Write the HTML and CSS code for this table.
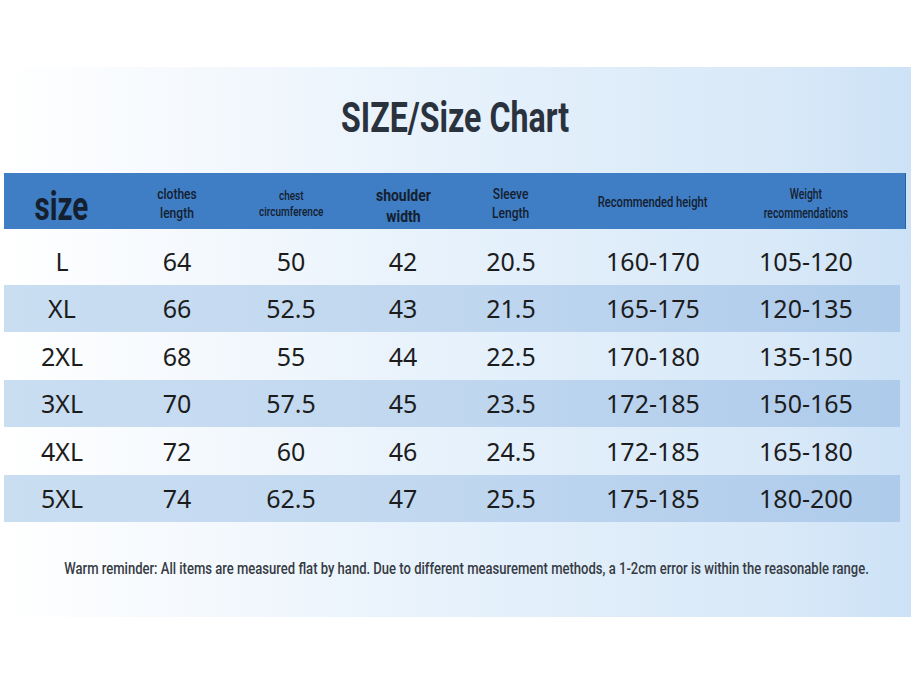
FILE: index.html
```html
<!DOCTYPE html>
<html lang="en">
<head>
<meta charset="utf-8">
<title>Size Chart</title>
<link rel="stylesheet" href="styles.css">
</head>
<body>
<div class="top-space"></div>
<section class="panel">
  <h1 class="title"><span class="sq">SIZE/Size Chart</span></h1>
  <div class="table">
    <div class="head">
      <div class="hcell hsize"><span class="sq">size</span></div>
      <div class="hcell hc-a"><span class="sq">clothes<br>length</span></div>
      <div class="hcell hsmall"><span class="sq">chest<br>circumference</span></div>
      <div class="hcell hbig"><span class="sq">shoulder<br>width</span></div>
      <div class="hcell hc-a"><span class="sq">Sleeve<br>Length</span></div>
      <div class="hcell hc-rec"><span class="sq">Recommended height</span></div>
      <div class="hcell"><span class="sq">Weight<br>recommendations</span></div>
    </div>
    <div class="row"><div>L</div><div>64</div><div>50</div><div>42</div><div>20.5</div><div>160-170</div><div>105-120</div></div>
    <div class="row band"><div>XL</div><div>66</div><div>52.5</div><div>43</div><div>21.5</div><div>165-175</div><div>120-135</div></div>
    <div class="row"><div>2XL</div><div>68</div><div>55</div><div>44</div><div>22.5</div><div>170-180</div><div>135-150</div></div>
    <div class="row band"><div>3XL</div><div>70</div><div>57.5</div><div>45</div><div>23.5</div><div>172-185</div><div>150-165</div></div>
    <div class="row"><div>4XL</div><div>72</div><div>60</div><div>46</div><div>24.5</div><div>172-185</div><div>165-180</div></div>
    <div class="row band"><div>5XL</div><div>74</div><div>62.5</div><div>47</div><div>25.5</div><div>175-185</div><div>180-200</div></div>
  </div>
  <p class="note"><span class="sq">Warm reminder: All items are measured flat by hand. Due to different measurement methods, a 1-2cm error is within the reasonable range.</span></p>
</section>
</body>
</html>
```
FILE: styles.css
```css
html, body {
  margin: 0;
  padding: 0;
  background: #ffffff;
}
body {
  width: 911px;
  height: 684px;
  overflow: hidden;
}
.top-space {
  height: 67px;
}
.panel {
  height: 550px;
  box-sizing: border-box;
  background: linear-gradient(90deg, #ffffff 0%, #f3f8fd 25%, #e4f0fb 55%, #d9e9f8 85%, #cde2f7 100%);
  padding-top: 27px;
  display: flex;
  flex-direction: column;
}
.sq {
  display: inline-block;
  white-space: nowrap;
  transform: scaleX(0.74);
  transform-origin: center center;
}
.title {
  margin: 0;
  height: 48px;
  line-height: 48px;
  text-align: center;
  font-family: "Roboto", "Liberation Sans", sans-serif;
  font-weight: 700;
  font-size: 42px;
  color: #2a323e;
}
.title .sq {
  transform: scaleX(0.765);
}
.table {
  margin-top: 31px;
  margin-left: 4px;
  display: flex;
  flex-direction: column;
}
.head {
  display: grid;
  grid-template-columns: 116px 114px 114px 110px 106px 178px 128px;
  width: 901px;
  height: 56px;
  background: #3f7dc5;
  box-shadow: 1px 0 0 #2d5f9e;
  align-items: center;
  margin-bottom: 8px;
}
.hcell {
  text-align: center;
  font-family: "Roboto", "Liberation Sans", sans-serif;
  font-weight: 500;
  font-size: 14px;
  line-height: 19px;
  color: #14202e;
  padding-top: 5px;
}
.hc-a .sq {
  transform: scaleX(0.86);
}
.hc-rec {
  padding-top: 2px;
}
.hc-rec .sq {
  transform: scaleX(0.8);
}
.hsmall {
  font-size: 12.5px;
  line-height: 16px;
  padding-top: 6px;
}
.hsmall .sq {
  transform: scaleX(0.8);
}
.hbig {
  font-size: 17px;
  font-weight: 700;
  line-height: 21px;
  padding-top: 9px;
}
.hbig .sq {
  transform: scaleX(0.82);
}
.hsize {
  font-size: 40px;
  font-weight: 700;
  line-height: 40px;
  padding-top: 12px;
  padding-right: 2px;
}
.row {
  display: grid;
  grid-template-columns: 116px 114px 114px 110px 106px 178px 128px;
  width: 896px;
  height: 47.5px;
  align-items: center;
  font-family: "Noto Sans", "Noto Sans CJK SC", sans-serif;
  font-size: 25px;
  color: #1c1c1c;
}
.row > div {
  text-align: center;
}
.band {
  background: linear-gradient(90deg, #cadef2 0%, #c0d7ef 50%, #aecbeb 100%);
}
.note {
  margin: 36px 0 0 0;
  padding-left: 22px;
  display: flex;
  justify-content: center;
  font-family: "Roboto", "Liberation Sans", sans-serif;
  font-weight: 500;
  font-size: 17px;
  color: #363b44;
}
.note .sq {
  flex: none;
  transform: scaleX(0.767);
}
```
